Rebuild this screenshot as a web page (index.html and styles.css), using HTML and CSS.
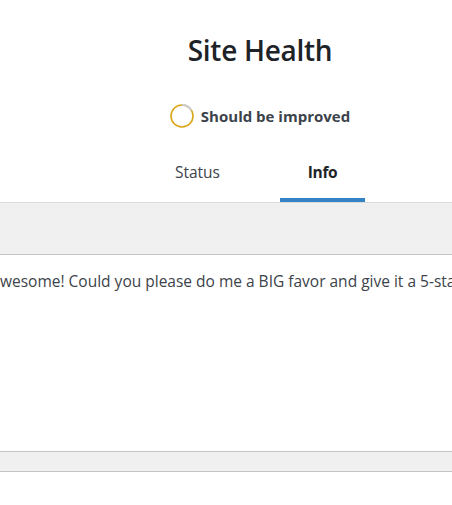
FILE: index.html
```html
<!DOCTYPE html>
<html lang="en">
<head>
<meta charset="utf-8">
<title>Site Health</title>
<link rel="stylesheet" href="styles.css">
</head>
<body>
<div class="page">
  <header class="hc-header">
    <h1 class="hc-title">Site Health</h1>
    <div class="hc-progress">
      <svg class="hc-ring" width="24" height="24" viewBox="0 0 24 24" aria-hidden="true">
        <circle cx="12" cy="12" r="11" fill="none" stroke="#dba617" stroke-width="1.6"/>
        <path d="M12 1 A11 11 0 0 1 21.53 6.5" fill="none" stroke="#c9ccd1" stroke-width="1.8"/>
      </svg>
      <span class="hc-progress-label">Should be improved</span>
    </div>
    <nav class="hc-tabs">
      <a class="hc-tab" href="#">Status</a>
      <a class="hc-tab is-active" href="#">Info</a>
    </nav>
  </header>
  <div class="hc-band"></div>
  <div class="hc-content">
    <p class="hc-rating">wesome! Could you please do me a BIG favor and give it a 5-star rating on WordPress?</p>
  </div>
  <div class="hc-footer-bar"></div>
</div>
</body>
</html>
```

FILE: styles.css
```css
html, body {
  margin: 0;
  padding: 0;
  overflow: hidden;
  background: #ffffff;
}

body {
  font-family: "Open Sans", "Noto Sans", sans-serif;
  color: #3c434a;
}

.page {
  width: 452px;
  overflow: hidden;
}

.hc-header {
  width: 520px;
  display: flex;
  flex-direction: column;
  align-items: center;
  padding-top: 34px;
  border-bottom: 1px solid #dcdcde;
  box-sizing: border-box;
}

.hc-title {
  margin: 0;
  font-size: 28px;
  line-height: 33.6px;
  font-weight: 600;
  color: #1d2327;
  letter-spacing: -0.3px;
}

.hc-progress {
  display: flex;
  align-items: center;
  gap: 7px;
  margin-top: 36px;
  height: 24px;
}

.hc-ring {
  display: block;
  flex: none;
}

.hc-progress-label {
  font-size: 15px;
  line-height: 24px;
  font-weight: 700;
  color: #3c434a;
}

.hc-tabs {
  display: inline-grid;
  grid-template-columns: 1fr 1fr;
  margin-top: 24px;
}

.hc-tab {
  margin: 0 20px;
  padding: 10px 20px 16px;
  font-size: 15.5px;
  line-height: 20px;
  color: #3c434a;
  text-decoration: none;
  text-align: center;
  border-bottom: 4px solid transparent;
}

.hc-tab.is-active {
  font-weight: 700;
  color: #1d2327;
  letter-spacing: -0.3px;
  border-bottom-color: #3582c4;
}

.hc-band {
  width: 452px;
  height: 51px;
  background: #f0f0f0;
  border-bottom: 1px solid #c3c4c7;
}

.hc-content {
  width: 452px;
  height: 196px;
  box-sizing: border-box;
  padding-top: 16px;
  overflow: hidden;
}

.hc-rating {
  margin: 0;
  font-size: 15.5px;
  line-height: 20px;
  white-space: nowrap;
  color: #3c434a;
}

.hc-footer-bar {
  width: 452px;
  height: 19px;
  background: #f0f0f0;
  border-top: 1px solid #c3c4c7;
  border-bottom: 1px solid #c3c4c7;
}
```
